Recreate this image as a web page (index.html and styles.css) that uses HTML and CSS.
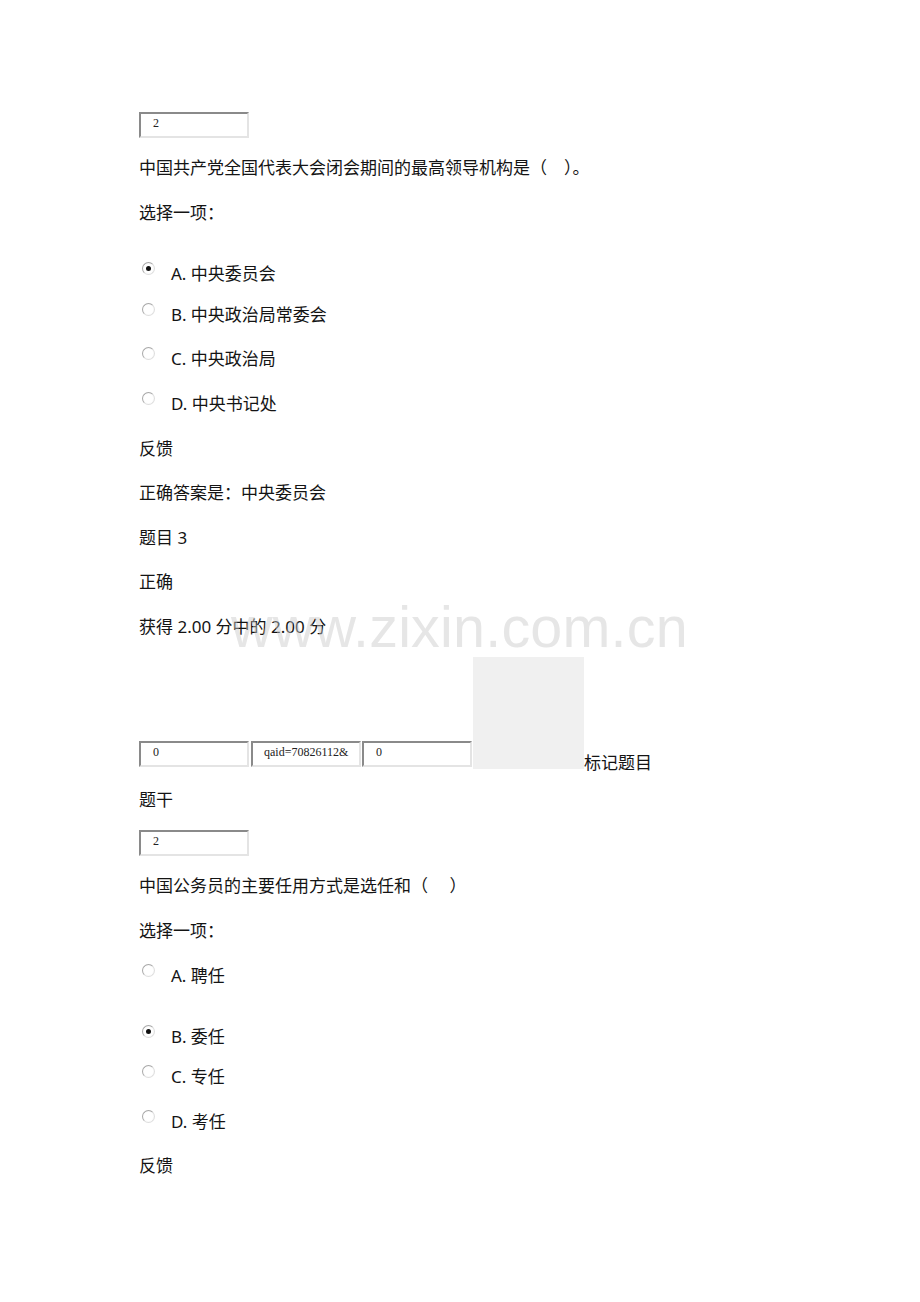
FILE: index.html
```html
<!DOCTYPE html>
<html lang="zh">
<head>
<meta charset="utf-8">
<title>题目</title>
<link rel="stylesheet" href="styles.css">
</head>
<body>
<div class="page">
  <div class="field f-top">2</div>
  <p class="line g20">中国共产党全国代表大会闭会期间的最高领导机构是（　）。</p>
  <p class="line g25">选择一项：</p>
  <div class="opt g41"><span class="radio on"></span><span class="lbl">A. 中央委员会</span></div>
  <div class="opt g21"><span class="radio"></span><span class="lbl">B. 中央政治局常委会</span></div>
  <div class="opt g24"><span class="radio"></span><span class="lbl">C. 中央政治局</span></div>
  <div class="opt g25"><span class="radio"></span><span class="lbl">D. 中央书记处</span></div>
  <p class="line g25">反馈</p>
  <p class="line g24">正确答案是：中央委员会</p>
  <p class="line g25">题目 3</p>
  <p class="line g24">正确</p>
  <p class="line g25">获得 2.00 分中的 2.00 分</p>
  <div class="flagrow g20">
    <div class="field">0</div>
    <div class="field f2">qaid=70826112&amp;</div>
    <div class="field f3">0</div>
    <div class="graybox"></div>
    <span class="flagtext">标记题目</span>
  </div>
  <p class="line g21">题干</p>
  <div class="field g20">2</div>
  <p class="line g20">中国公务员的主要任用方式是选任和（　 ）</p>
  <p class="line g25">选择一项：</p>
  <div class="opt g25"><span class="radio"></span><span class="lbl">A. 聘任</span></div>
  <div class="opt g41"><span class="radio on"></span><span class="lbl">B. 委任</span></div>
  <div class="opt g20"><span class="radio"></span><span class="lbl">C. 专任</span></div>
  <div class="opt g25"><span class="radio"></span><span class="lbl">D. 考任</span></div>
  <p class="line g24">反馈</p>
  <div class="watermark">www.zixin.com.cn</div>
</div>
</body>
</html>
```

FILE: styles.css
```css
html, body {
  margin: 0;
  padding: 0;
  background: #ffffff;
}
body {
  font-family: "Noto Sans", "Noto Sans CJK SC", sans-serif;
  font-size: 17px;
  color: #141414;
}
.page {
  position: relative;
  width: 920px;
  height: 1302px;
  padding: 112px 0 0 139px;
  box-sizing: border-box;
  display: flex;
  flex-direction: column;
  align-items: flex-start;
}
.line {
  margin: 0;
  height: 20px;
  line-height: 20px;
  white-space: nowrap;
  font-size: 17px;
}
.g20 { margin-top: 20px; }
.g21 { margin-top: 21px; }
.g24 { margin-top: 24px; }
.g25 { margin-top: 25px; }
.g41 { margin-top: 41px; }
.field {
  width: 110px;
  height: 26px;
  box-sizing: border-box;
  border-style: solid;
  border-width: 2px;
  border-color: #8a8a8a #e4e4e4 #e4e4e4 #8a8a8a;
  background: #fff;
  font-family: "Liberation Serif", serif;
  font-size: 12px;
  line-height: 18px;
  padding-left: 12px;
  color: #222;
  flex-shrink: 0;
}
.f2 { margin-left: 2px; padding-left: 11px; }
.f3 { margin-left: 1px; }
.opt {
  display: flex;
  align-items: flex-start;
  height: 20px;
}
.radio {
  width: 13px;
  height: 13px;
  box-sizing: border-box;
  border-radius: 50%;
  margin: -2px 0 0 3px;
  border: 1px solid #a8a8a8;
  border-right-color: #dedede;
  border-bottom-color: #dedede;
  background: radial-gradient(circle at 50% 50%, #ffffff 0 55%, #e8e8e8 100%);
  position: relative;
}
.radio.on::after {
  content: "";
  position: absolute;
  left: 3px;
  top: 3px;
  width: 5px;
  height: 5px;
  border-radius: 50%;
  background: #111;
}
.lbl {
  margin-left: 16px;
  line-height: 20px;
  white-space: nowrap;
}
.flagrow {
  display: flex;
  align-items: flex-end;
}
.flagrow .field { margin-bottom: 2px; }
.graybox {
  width: 111px;
  height: 112px;
  background: #f0f0f0;
  margin-left: 1px;
}
.flagtext {
  line-height: 20px;
  height: 20px;
  margin-bottom: -4px;
  white-space: nowrap;
}
.watermark {
  position: absolute;
  left: 231px;
  top: 594px;
  font-family: "Liberation Sans", Arial, sans-serif;
  font-size: 57.5px;
  line-height: 66px;
  letter-spacing: 0.2px;
  color: rgba(200, 200, 200, 0.45);
  white-space: nowrap;
  pointer-events: none;
}
```
